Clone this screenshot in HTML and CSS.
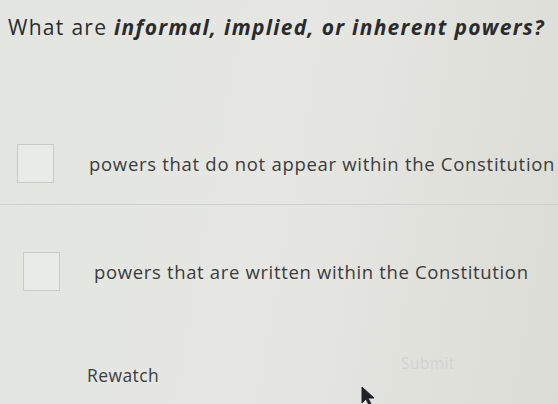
FILE: index.html
```html
<!DOCTYPE html>
<html>
<head>
<meta charset="utf-8">
<link rel="stylesheet" href="styles.css">
</head>
<body>
<div class="page">
  <h1 class="question">What are <em>informal, implied, or inherent powers?</em></h1>
  <div class="options">
    <div class="option first">
      <span class="box"></span>
      <span class="label">powers that do not appear within the Constitution</span>
    </div>
    <div class="option second">
      <span class="box"></span>
      <span class="label">powers that are written within the Constitution</span>
    </div>
  </div>
  <div class="footer">
    <span class="rewatch">Rewatch</span>
    <span class="submit">Submit</span>
  </div>
  <svg class="cursor" width="14" height="20" viewBox="0 0 14 20"><path d="M1 1 L1 17 L5 13 L8 19 L10 18 L7 12 L13 12 Z" fill="#1e2226" stroke="#1e2226" stroke-width="1"/></svg>
</div>
</body>
</html>
```
FILE: styles.css
```css
html, body {
  margin: 0;
  padding: 0;
}
body {
  width: 558px;
  height: 404px;
  overflow: hidden;
  background: linear-gradient(100deg, #e3e5e1 0%, #e6e7e3 50%, #dcdcd6 100%);
  font-family: "Open Sans", "Liberation Sans", sans-serif;
  color: #2c2d2e;
}
.page {
  position: relative;
  height: 404px;
}
.question {
  margin: 0;
  padding: 13px 0 0 8px;
  font-size: 21px;
  font-weight: 500;
  line-height: 28px;
  letter-spacing: 1.3px;
  white-space: nowrap;
  color: #2a2b2c;
}
.question em {
  font-weight: 700;
  font-style: italic;
}
.options {
  margin-top: 103px;
  display: flex;
  flex-direction: column;
}
.option {
  display: flex;
  align-items: center;
}
.option.first {
  padding: 0 0 21px 17px;
  border-bottom: 1px solid #cfd1cc;
  gap: 35px;
}
.option.second {
  padding: 47px 0 0 23px;
  gap: 34px;
}
.box {
  width: 35px;
  height: 37px;
  border: 1.5px solid #c9cbc7;
  background: #e9ebe8;
  flex: none;
}
.label {
  font-size: 18.5px;
  color: #3a3b3c;
  white-space: nowrap;
  letter-spacing: 0.7px;
}
.option.second .label {
  letter-spacing: 0.65px;
}
.footer {
  margin-top: 72px;
  display: flex;
  align-items: center;
  padding-left: 87px;
}
.rewatch {
  font-size: 17.5px;
  letter-spacing: 0.4px;
  color: #3c3d3e;
}
.submit {
  margin-left: 242px;
  margin-top: -24px;
  font-size: 15.5px;
  letter-spacing: 0.4px;
  color: #d2d3d0;
}
.cursor {
  position: absolute;
  left: 361px;
  top: 386px;
}
```
